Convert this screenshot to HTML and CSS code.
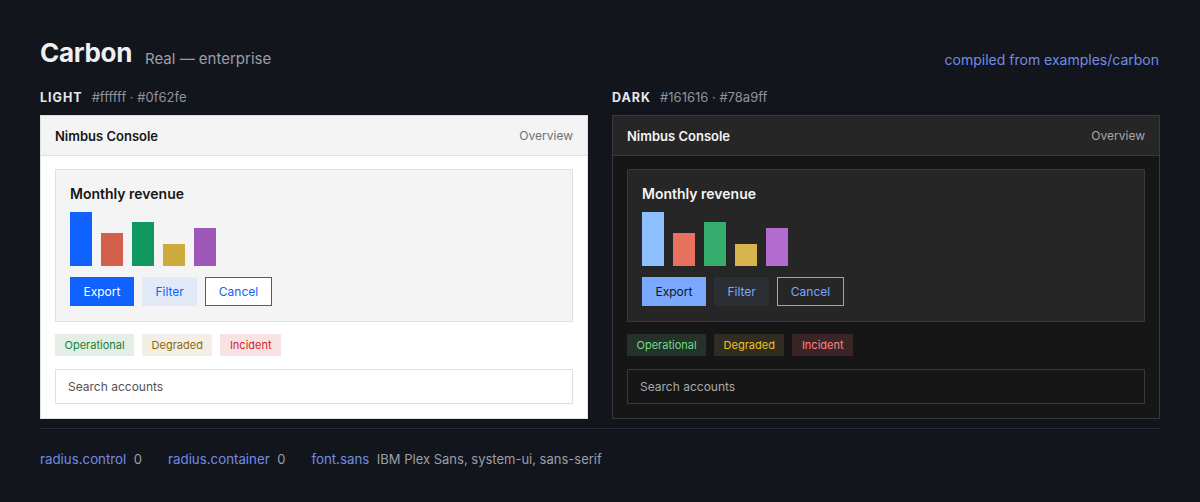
FILE: index.html
```html
<!DOCTYPE html>
<html>
<head>
<meta charset="utf-8">
<link rel="stylesheet" href="styles.css">
</head>
<body>
<div class="page">
  <header class="top">
    <div class="title-group">
      <h1 class="title">Carbon</h1>
      <span class="subtitle">Real — enterprise</span>
    </div>
    <a class="source">compiled from examples/carbon</a>
  </header>

  <div class="columns">
    <section class="column">
      <div class="label"><span class="mode">LIGHT</span><span class="hex">#ffffff · #0f62fe</span></div>
      <div class="panel light">
        <div class="panel-head"><span class="app">Nimbus Console</span><span class="nav">Overview</span></div>
        <div class="panel-body">
          <div class="card">
            <div class="card-title">Monthly revenue</div>
            <div class="bars">
              <div class="bar b1" style="height:54px"></div>
              <div class="bar b2" style="height:33px"></div>
              <div class="bar b3" style="height:44px"></div>
              <div class="bar b4" style="height:22px"></div>
              <div class="bar b5" style="height:38px"></div>
            </div>
            <div class="buttons">
              <span class="btn primary">Export</span>
              <span class="btn secondary">Filter</span>
              <span class="btn outline">Cancel</span>
            </div>
          </div>
          <div class="badges">
            <span class="badge ok">Operational</span>
            <span class="badge warn">Degraded</span>
            <span class="badge bad">Incident</span>
          </div>
          <div class="input">Search accounts</div>
        </div>
      </div>
    </section>

    <section class="column">
      <div class="label"><span class="mode">DARK</span><span class="hex">#161616 · #78a9ff</span></div>
      <div class="panel dark">
        <div class="panel-head"><span class="app">Nimbus Console</span><span class="nav">Overview</span></div>
        <div class="panel-body">
          <div class="card">
            <div class="card-title">Monthly revenue</div>
            <div class="bars">
              <div class="bar b1" style="height:54px"></div>
              <div class="bar b2" style="height:33px"></div>
              <div class="bar b3" style="height:44px"></div>
              <div class="bar b4" style="height:22px"></div>
              <div class="bar b5" style="height:38px"></div>
            </div>
            <div class="buttons">
              <span class="btn primary">Export</span>
              <span class="btn secondary">Filter</span>
              <span class="btn outline">Cancel</span>
            </div>
          </div>
          <div class="badges">
            <span class="badge ok">Operational</span>
            <span class="badge warn">Degraded</span>
            <span class="badge bad">Incident</span>
          </div>
          <div class="input">Search accounts</div>
        </div>
      </div>
    </section>
  </div>

  <footer class="tokens">
    <span class="token"><span class="tk">radius.control</span><span class="tv">0</span></span>
    <span class="token"><span class="tk">radius.container</span><span class="tv">0</span></span>
    <span class="token"><span class="tk">font.sans</span><span class="tv">IBM Plex Sans, system-ui, sans-serif</span></span>
  </footer>
</div>
</body>
</html>
```

FILE: styles.css
```css
* { box-sizing: border-box; }
html, body { margin: 0; padding: 0; }
body {
  background: #13151d;
  font-family: Inter, "Noto Sans", "Liberation Sans", sans-serif;
  color: #e8e8ea;
  width: 1200px;
  height: 502px;
  overflow: hidden;
}
.page { padding: 36px 40px 0 40px; }

.top {
  display: flex;
  justify-content: space-between;
  align-items: flex-end;
  height: 32px;
}
.title-group { display: flex; align-items: flex-end; gap: 13px; }
.title {
  margin: 0;
  font-size: 26px;
  font-weight: 700;
  color: #eef0f3;
  letter-spacing: -0.3px;
}
.subtitle { font-size: 15px; color: #9a9fa8; }
.source { font-size: 14px; color: #6f8de6; margin-right: 1px; }

.columns {
  display: grid;
  grid-template-columns: 548px 548px;
  gap: 24px;
  margin-top: 21px;
}
.label { display: flex; align-items: baseline; gap: 9px; height: 19px; margin-bottom: 7px; }
.mode { font-size: 12.5px; font-weight: 700; letter-spacing: 1px; color: #e6e7ea; }
.hex { font-size: 13px; color: #8e939c; }

.panel { border: 1px solid; }
.panel-head {
  height: 40px;
  display: flex;
  justify-content: space-between;
  align-items: center;
  padding: 0 14px;
  border-bottom: 1px solid;
}
.app { font-size: 13px; font-weight: 600; }
.nav { font-size: 12px; }
.panel-body { padding: 13px 14px 14px 14px; }

.card { border: 1px solid; padding: 14px 14px 15px 14px; }
.card-title { font-size: 14px; font-weight: 600; height: 20px; line-height: 20px; }
.bars { display: flex; align-items: flex-end; gap: 9px; height: 54px; margin-top: 8px; }
.bar { width: 22px; }
.buttons { display: flex; gap: 8px; margin-top: 11px; }
.btn {
  height: 29px;
  display: inline-flex;
  align-items: center;
  font-size: 12px;
  padding: 0 12.5px;
  border: 1px solid transparent;
}

.badges { display: flex; gap: 8px; margin-top: 12px; }
.badge { height: 22px; display: inline-flex; align-items: center; padding: 0 9.5px; font-size: 11px; }

.input {
  margin-top: 13px;
  height: 35px;
  border: 1px solid;
  display: flex;
  align-items: center;
  padding: 0 12px;
  font-size: 12px;
}

/* light */
.light { background: #ffffff; border-color: #e0e0e0; }
.light .panel-head { background: #f4f4f4; border-color: #e0e0e0; }
.light .app { color: #161616; }
.light .nav { color: #6f6f6f; }
.light .card { background: #f4f4f4; border-color: #e0e0e0; }
.light .card-title { color: #161616; }
.light .b1 { background: #0f62fe; }
.light .b2 { background: #d2604c; }
.light .b3 { background: #0f9960; }
.light .b4 { background: #ccab3c; }
.light .b5 { background: #9d58b7; }
.light .btn.primary { background: #0f62fe; color: #ffffff; }
.light .btn.secondary { background: #e3eaf7; color: #0f62fe; }
.light .btn.outline { border-color: #0f62fe; color: #0f62fe; background: #ffffff; }
.light .badge.ok { background: #e3efe6; color: #198038; }
.light .badge.warn { background: #f3efe6; color: #8e6a00; }
.light .badge.bad { background: #f7e3e4; color: #da1e28; }
.light .input { background: #ffffff; border-color: #e0e0e0; color: #525252; }

/* dark */
.dark { background: #161616; border-color: #393939; }
.dark .panel-head { background: #262626; border-color: #393939; }
.dark .app { color: #f4f4f4; }
.dark .nav { color: #a8a8a8; }
.dark .card { background: #262626; border-color: #393939; }
.dark .card-title { color: #f4f4f4; }
.dark .b1 { background: #8ec0ff; }
.dark .b2 { background: #e8705f; }
.dark .b3 { background: #35ad6c; }
.dark .b4 { background: #d7b44b; }
.dark .b5 { background: #b46bcf; }
.dark .btn.primary { background: #78a9ff; color: #161616; }
.dark .btn.secondary { background: #2b2e35; color: #78a9ff; }
.dark .btn.outline { border-color: #78a9ff; color: #78a9ff; background: #262626; }
.dark .badge.ok { background: #243229; color: #6fdc8c; }
.dark .badge.warn { background: #302c22; color: #f1c21b; }
.dark .badge.bad { background: #3a2526; color: #ff8389; }
.dark .input { background: #161616; border-color: #393939; color: #a8a8a8; }

.tokens {
  margin-top: 9px;
  border-top: 1px solid #2a2d36;
  padding-top: 22px;
  display: flex;
  gap: 26px;
  font-size: 13.3px;
}
.token { display: flex; gap: 7.5px; }
.tk { color: #6f8de6; }
.tv { color: #9a9fa8; font-size: 13px; }
```
